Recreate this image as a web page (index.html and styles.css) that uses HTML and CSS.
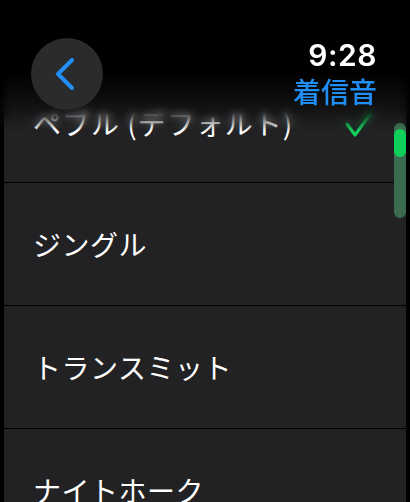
FILE: index.html
```html
<!DOCTYPE html>
<html lang="ja">
<head>
    <meta charset="UTF-8">
    <meta name="viewport" content="width=device-width, initial-scale=1.0">
    <title>着信音</title>
    <link rel="stylesheet" href="styles.css">
</head>
<body>

    <div class="screen">
        <ul class="tone-list">
            <li class="tone-row selected">
                <span class="tone-name">ペブル (デフォルト)</span>
                <svg class="check" width="28" height="26" viewBox="0 0 28 26">
                    <path d="M2 13 L10 24 L26 2" fill="none" stroke="#16d05e" stroke-width="3" stroke-linecap="round" stroke-linejoin="round"/>
                </svg>
            </li>
            <li class="tone-row"><span class="tone-name">ジングル</span></li>
            <li class="tone-row"><span class="tone-name">トランスミット</span></li>
            <li class="tone-row"><span class="tone-name">ナイトホーク</span></li>
        </ul>

        <!-- ヘッダーはリストの上に重なる -->
        <header class="top-bar">
            <button class="back-btn">
                <svg width="22" height="34" viewBox="0 0 22 34">
                    <path d="M18 3 L4 17 L18 31" fill="none" stroke="#1f8ff5" stroke-width="4" stroke-linecap="round" stroke-linejoin="round"/>
                </svg>
            </button>
            <div class="title-block">
                <div class="clock">9:28</div>
                <div class="title">着信音</div>
            </div>
        </header>

        <div class="scrollbar">
            <div class="scroll-thumb"></div>
        </div>
    </div>

</body>
</html>
```

FILE: styles.css
```css
body {
    margin: 0;
    padding: 0;
    background: #000;
    font-family: "Noto Sans CJK JP", "Noto Sans", sans-serif;
    color: #fff;
    overflow: hidden;
}
.screen {
    position: relative;
    width: 410px;
    height: 502px;
    overflow: hidden;
}
.tone-list {
    list-style: none;
    margin: 60px 0 0 0;
    padding: 0 4px 0 4px;
    display: flex;
    flex-direction: column;
    gap: 1px;
}
.tone-row {
    height: 122px;
    background: #222224;
    display: flex;
    align-items: center;
    padding: 0 33px 0 29px;
}
.tone-name {
    font-size: 28px;
    letter-spacing: 0.5px;
}
.selected .tone-name {
    padding-top: 4px;
    letter-spacing: 1px;
}
.check {
    margin-left: auto;
    margin-top: 6px;
}
.top-bar {
    position: absolute;
    top: 0;
    left: 0;
    right: 0;
    height: 132px;
    display: flex;
    justify-content: space-between;
    align-items: flex-start;
    padding: 38px 33px 0 31px;
    box-sizing: border-box;
    background: linear-gradient(#000 0%, #000 55%, rgba(0, 0, 0, 0.6) 75%, rgba(0, 0, 0, 0) 100%);
    backdrop-filter: blur(4px);
    -webkit-mask-image: linear-gradient(#000 85%, transparent 100%);
}
.back-btn {
    width: 72px;
    height: 72px;
    border: none;
    border-radius: 50%;
    background: #2b2b2d;
    display: flex;
    align-items: center;
    justify-content: center;
    padding: 0 4px 0 0;
}
.title-block {
    text-align: right;
    margin-top: 1px;
}
.clock {
    font-family: Inter, "Noto Sans", sans-serif;
    font-weight: 600;
    font-size: 30px;
    line-height: 32px;
    letter-spacing: 0.5px;
}
.title {
    font-size: 28px;
    font-weight: 500;
    line-height: 40px;
    color: #1f8ff5;
}
.scrollbar {
    position: absolute;
    top: 123px;
    left: 394px;
    width: 12px;
    height: 95px;
    border-radius: 6px;
    background: #3a6b4e;
}
.scroll-thumb {
    margin-top: 6px;
    height: 28px;
    border-radius: 6px;
    background: #0dcf5a;
}
```
